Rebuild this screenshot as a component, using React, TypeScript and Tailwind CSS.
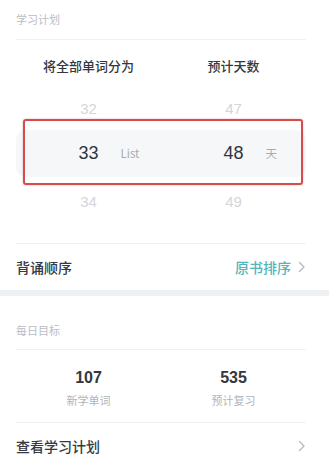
import React from "react";

const cjk = { fontFamily: '"Noto Sans CJK SC", "Noto Sans", sans-serif' };
const num = { fontFamily: '"Liberation Sans", Arial, "Noto Sans CJK SC", sans-serif' };

function Chevron() {
  return (
    <svg width="8" height="12" viewBox="0 0 8 12" fill="none">
      <polyline points="1.5,1.5 6,6 1.5,10.5" stroke="#b5b9bf" strokeWidth="1.3" strokeLinecap="round" strokeLinejoin="round" />
    </svg>
  );
}

function WheelCell({ value, unit, selected }: { value: string; unit?: string; selected?: boolean }) {
  return (
    <div className="flex items-center justify-center">
      <span className="relative">
        <span
          style={num}
          className={selected ? "text-[18px] text-[#2f3540]" : "text-[15px] text-[#d3d6db]"}
        >
          {value}
        </span>
        {unit && (
          <span
            style={cjk}
            className="absolute left-[calc(100%+22px)] top-1/2 -translate-y-1/2 whitespace-nowrap text-[11.5px] text-[#a7abb2]"
          >
            {unit}
          </span>
        )}
      </span>
    </div>
  );
}

export default function App() {
  return (
    <div className="w-[329px] h-[475px] bg-white overflow-hidden" style={cjk}>
      {/* Section 1 */}
      <div className="pl-4 pr-[23px]">
        <div className="h-10 flex items-center text-[11px] text-[#b9bdc4] border-b border-[#eef0f3]">学习计划</div>
        <div className="grid grid-cols-2 h-[52px] items-center text-[13px] font-medium text-[#333840]">
          <div className="text-center">将全部单词分为</div>
          <div className="text-center">预计天数</div>
        </div>
        <div className="grid grid-cols-2 h-[32px] items-center">
          <WheelCell value="32" />
          <WheelCell value="47" />
        </div>
        <div className="relative mt-[6px]">
          <div className="grid grid-cols-2 h-[47px] items-center bg-[#f5f7f9] rounded-[10px]">
            <WheelCell value="33" unit="List" selected />
            <WheelCell value="48" unit="天" selected />
          </div>
          <div className="absolute left-[7px] right-[3px] top-[-11px] bottom-[-8px] border-2 border-[#d44c4c] rounded-[3px] shadow-[0_0_2px_rgba(212,76,76,0.5)]" />
        </div>
        <div className="grid grid-cols-2 h-[32px] mt-[8px] items-center">
          <WheelCell value="34" />
          <WheelCell value="49" />
        </div>
        <div className="h-[27px] border-b border-[#eef0f3]" />
        <div className="h-[46px] flex items-center justify-between">
          <span className="text-[14px] font-medium text-[#353a42]">背诵顺序</span>
          <span className="flex items-center gap-[7px]">
            <span className="text-[14px] font-medium text-[#52b6b8]">原书排序</span>
            <Chevron />
          </span>
        </div>
      </div>
      <div className="h-[6px] bg-[#eef1f3]" />
      {/* Section 2 */}
      <div className="pl-4 pr-[23px] pt-[16px]">
        <div className="h-[38px] flex items-center text-[11px] text-[#b9bdc4] border-b border-[#eef0f3]">每日目标</div>
        <div className="grid grid-cols-2 h-[73px] border-b border-[#eef0f3]">
          <div className="flex flex-col items-center pt-[17px]">
            <span style={num} className="text-[16px] font-bold text-[#333840] leading-[22px]">107</span>
            <span className="text-[11px] text-[#b0b4ba] leading-[22px]">新学单词</span>
          </div>
          <div className="flex flex-col items-center pt-[17px]">
            <span style={num} className="text-[16px] font-bold text-[#333840] leading-[22px]">535</span>
            <span className="text-[11px] text-[#b0b4ba] leading-[22px]">预计复习</span>
          </div>
        </div>
        <div className="h-[46px] flex items-center justify-between">
          <span className="text-[14px] font-medium text-[#353a42]">查看学习计划</span>
          <Chevron />
        </div>
      </div>
    </div>
  );
}
